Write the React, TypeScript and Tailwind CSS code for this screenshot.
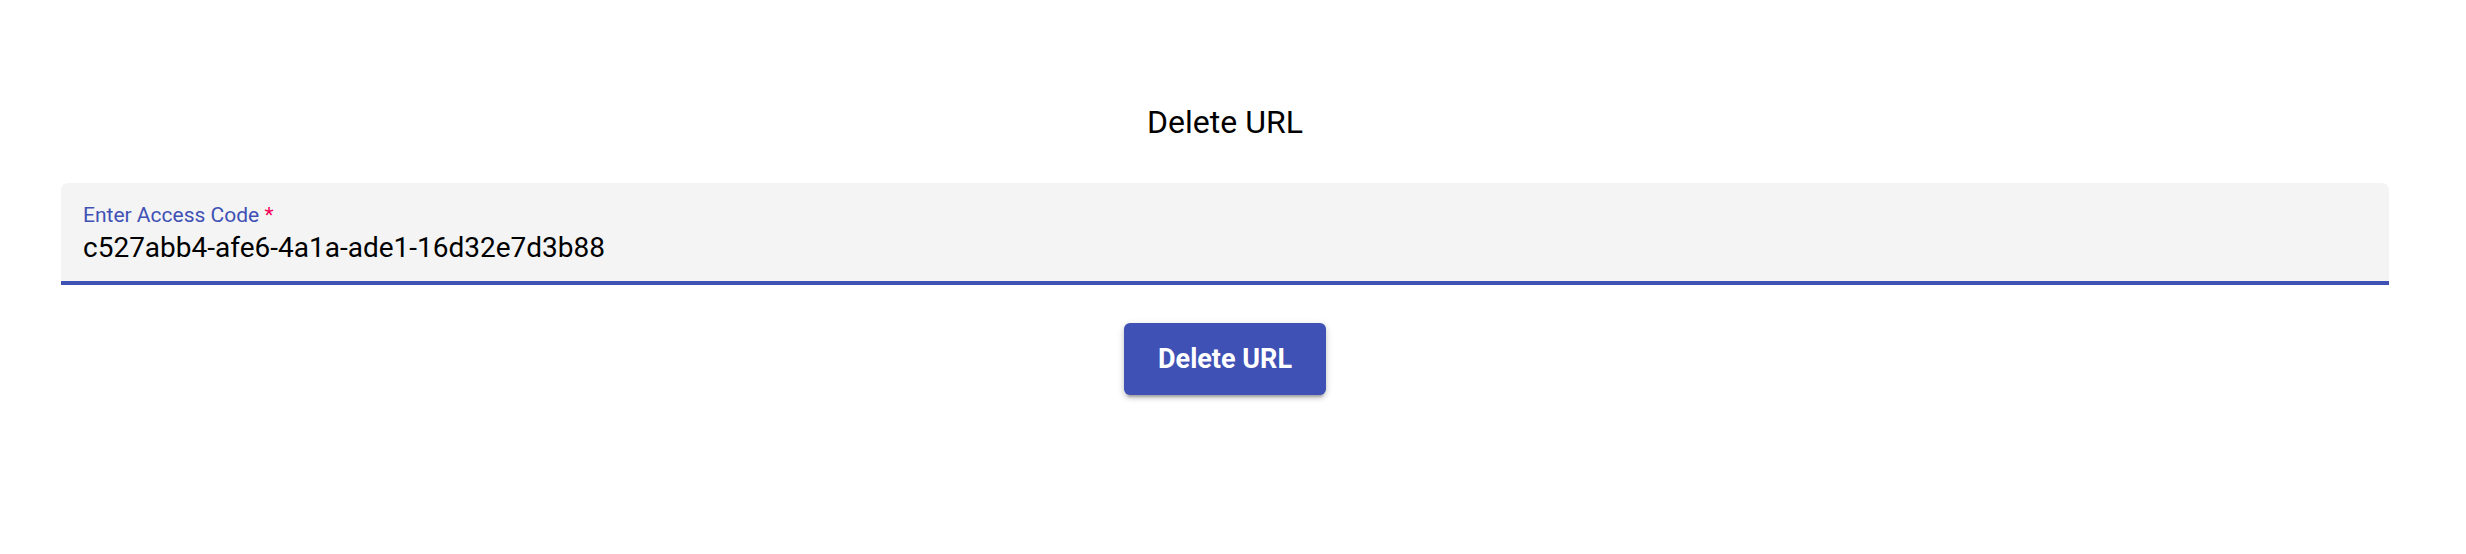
import React from "react";

export default function App() {
  return (
    <div
      className="w-[2466px] h-[554px] bg-white overflow-hidden"
      style={{ fontFamily: "Roboto, 'Liberation Sans', sans-serif" }}
    >
      <div className="ml-[61px] w-[2328px] pt-[102px] flex flex-col items-center">
        <h1 className="h-[40px] leading-[40px] text-[32px] font-normal text-black">
          Delete URL
        </h1>
        <div className="mt-[41px] w-full h-[102px] bg-[#f4f4f4] rounded-t-[7px] border-b-[4px] border-[#3f51b5] px-[22px] pt-[20px] flex flex-col">
          <label className="h-[24px] leading-[24px] text-[21px] text-[#3f51b5]">
            Enter Access Code<span className="text-[#f50057]"> *</span>
          </label>
          <div className="mt-[5px] h-[32px] leading-[32px] text-[28px] text-black">
            c527abb4-afe6-4a1a-ade1-16d32e7d3b88
          </div>
        </div>
        <button className="mt-[38px] w-[202px] h-[72px] rounded-[6px] bg-[#3f51b5] text-white text-[27px] font-bold leading-none shadow-[0_5px_2px_-3px_rgba(0,0,0,0.2),0_3px_5px_0_rgba(0,0,0,0.14),0_2px_9px_0_rgba(0,0,0,0.12)]">
          Delete URL
        </button>
      </div>
    </div>
  );
}
